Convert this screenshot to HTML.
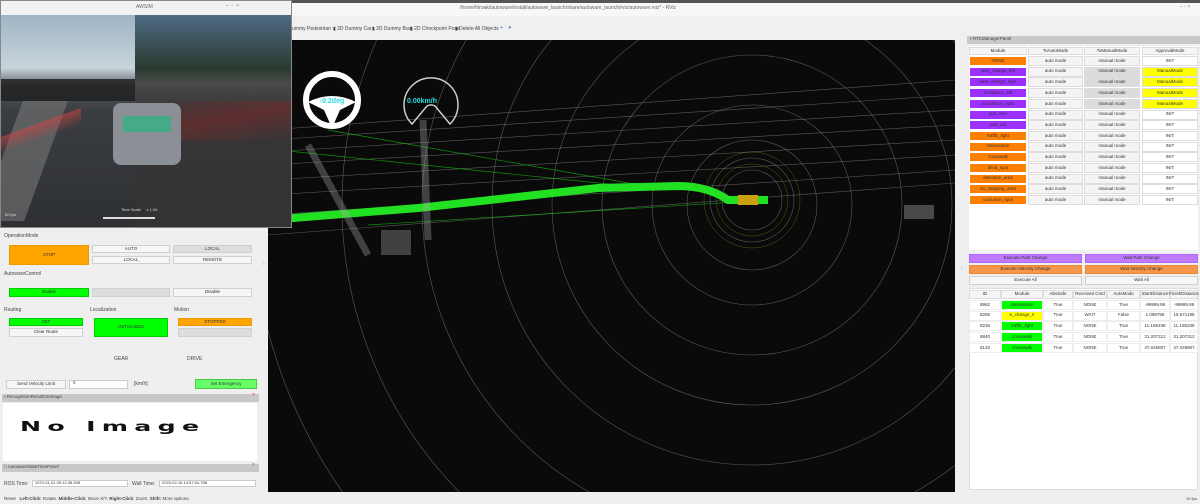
<!DOCTYPE html><html><head><style>
*{margin:0;padding:0;box-sizing:border-box}
html{overflow:hidden;height:504px}
body{width:1200px;height:504px;overflow:hidden;background:#efefef;font-family:"Liberation Sans",sans-serif;font-size:5px;color:#333;position:relative;line-height:1}
.a{position:absolute}
.b{position:absolute;display:flex;align-items:center;justify-content:center;font-size:4.5px;border:1px solid #d0d0d0;background:#f6f6f6;color:#333}
.t{position:absolute;font-size:5px;color:#444}
.c{position:absolute;display:flex;align-items:center;justify-content:center;font-size:4.5px;height:10px;border:1px solid #ddd}
</style></head><body>
<div class="a" style="left:0;top:0;width:1200px;height:3px;background:#555"></div>
<div class="a" style="left:0;top:3px;width:1200px;height:13px;background:#f7f7f7"></div>
<div class="t" style="left:460px;top:6px;color:#666">/home/hiroaki/autoware/install/autoware_launch/share/autoware_launch/rviz/autoware.rviz* - RViz</div>
<div class="t" style="left:1180px;top:5px;color:#888">– ▫ ×</div>
<div class="a" style="left:0;top:16px;width:1200px;height:24px;background:#f0f0f0"></div>
<div class="t" style="left:292px;top:27px">ummy Pedestrian</div>
<div class="t" style="left:333px;top:27px">▮ 2D Dummy Car</div>
<div class="t" style="left:372px;top:27px">▮ 2D Dummy Bus</div>
<div class="t" style="left:410px;top:27px">▮ 2D Checkpoint Pose</div>
<div class="t" style="left:455px;top:27px">▮ Delete All Objects</div>
<div class="t" style="left:500px;top:26px;color:#36c">+ &nbsp;&nbsp; ▾</div>
<div class="a" style="left:268px;top:40px;width:687px;height:452px;background:#0a0a0a;overflow:hidden">
<svg width="687" height="452" style="position:absolute;left:0;top:0">
<g fill="none" stroke="#aaa" stroke-width="0.6" opacity="0.5">
<circle cx="484" cy="160" r="30"/><circle cx="484" cy="160" r="42"/><circle cx="484" cy="165" r="65"/>
<circle cx="484" cy="165" r="100"/><circle cx="484" cy="165" r="150"/><circle cx="484" cy="165" r="200"/>
<circle cx="484" cy="165" r="260"/><circle cx="484" cy="165" r="330"/><circle cx="484" cy="165" r="410"/><circle cx="484" cy="165" r="500"/>
</g>
<g fill="none" stroke="#c9a010" stroke-width="0.5" opacity="0.5"><circle cx="484" cy="160" r="36"/><circle cx="484" cy="160" r="48"/></g>
<g stroke="#999" stroke-width="0.6" opacity="0.55">
<line x1="0" y1="90" x2="687" y2="40"/><line x1="0" y1="100" x2="687" y2="55"/><line x1="0" y1="112" x2="687" y2="70"/>
<line x1="0" y1="125" x2="687" y2="85"/><line x1="0" y1="140" x2="687" y2="100"/><line x1="0" y1="155" x2="687" y2="115"/>
<line x1="0" y1="175" x2="687" y2="130"/><line x1="0" y1="195" x2="687" y2="143"/>
</g>
<g stroke="#1c1" stroke-width="0.7" opacity="0.7"><line x1="60" y1="90" x2="400" y2="150"/><line x1="10" y1="110" x2="350" y2="145"/><line x1="100" y1="185" x2="500" y2="160"/></g>
<path d="M0 180 L150 168 L330 148 L410 146 Q440 146 460 160 L500 160" fill="none" stroke="#22e022" stroke-width="8"/>
<rect x="470" y="155" width="20" height="10" fill="#c9a010"/>
<g fill="none" stroke="#aaa" stroke-width="7" opacity="0.35"><path d="M40 105 L100 215"/><path d="M155 80 L160 200"/></g>
<rect x="113" y="190" width="30" height="25" fill="#777" opacity="0.5"/>
<rect x="636" y="165" width="30" height="14" fill="#888" opacity="0.5"/>
<circle cx="64" cy="60" r="26" fill="none" stroke="#fff" stroke-width="6"/>
<path d="M40 62 Q64 50 88 62 L72 70 L64 88 L56 70Z" fill="#fff"/>
<text x="64" y="63" fill="#2dd" font-size="7" font-weight="bold" text-anchor="middle" font-family="Liberation Sans">-0.2deg</text>
<path d="M144 84 A27 27 0 1 1 182 84 L167 66 A8 8 0 0 0 159 66 Z" fill="none" stroke="#ccc" stroke-width="1.5"/>
<text x="154" y="63" fill="#2dd" font-size="7" font-weight="bold" text-anchor="middle" font-family="Liberation Sans">0.00km/h</text>
</svg></div>
<div class="a" style="left:0;top:0;width:292px;height:228px;background:#222;border:1px solid #888;overflow:hidden">
<div class="a" style="left:0;top:0;width:290px;height:14px;background:#f2f2f2"></div>
<div class="t" style="left:135px;top:4px;color:#666">AWSIM</div>
<div class="t" style="left:225px;top:3px;color:#777">– &nbsp;▫ &nbsp;×</div>
<div class="a" style="left:0;top:14px;width:134px;height:213px;background:linear-gradient(#9fb4c6 0,#c8d4da 25%,#555a60 34%,#3a3d42 45%,#2e3033 100%)"></div>
<div class="a" style="left:134px;top:14px;width:156px;height:213px;background:linear-gradient(#4d6b84 0,#2b3a30 25%,#4a4a4a 32%,#363638 45%,#333 100%)"></div>
<div class="a" style="left:0;top:78px;width:134px;height:22px;background:#1c1c1c;opacity:.8"></div>
<div class="a" style="left:0;top:100px;width:45px;height:120px;background:#777;opacity:.6;transform:skewX(-20deg)"></div>
<div class="a" style="left:134px;top:100px;width:156px;height:40px;background:linear-gradient(170deg,transparent,#7a2a2a 50%,transparent);opacity:.6"></div>
<div class="a" style="left:112px;top:102px;width:68px;height:62px;background:#8a9096;border-radius:8px"></div>
<div class="a" style="left:122px;top:115px;width:48px;height:16px;background:#4a8"></div>
<div class="a" style="left:0;top:100px;width:80px;height:60px;background:linear-gradient(160deg,transparent 40%,#c44 41%,transparent 60%);opacity:.6"></div>
<div class="t" style="left:120px;top:207px;color:#ddd;font-size:4px">Time Scale &nbsp;&nbsp;&nbsp; x 1.00</div>
<div class="a" style="left:102px;top:216px;width:52px;height:2px;background:#ddd"></div>
<div class="t" style="left:4px;top:212px;color:#ddd;font-size:4px">60 fps</div>
</div>
<div class="a" style="left:0;top:228px;width:265px;height:264px;background:#efefef"></div>
<div class="t" style="left:4px;top:234px">OperationMode</div>
<div class="b" style="left:9px;top:245px;width:80px;height:20px;background:#ffa500;border-color:#e90">STOP</div>
<div class="b" style="left:92px;top:245px;width:78px;height:8px">AUTO</div>
<div class="b" style="left:173px;top:245px;width:79px;height:8px;background:#ddd">LOCAL</div>
<div class="b" style="left:92px;top:256px;width:78px;height:8px">LOCAL</div>
<div class="b" style="left:173px;top:256px;width:79px;height:8px">REMOTE</div>
<div class="t" style="left:4px;top:272px">AutowareControl</div>
<div class="b" style="left:9px;top:288px;width:80px;height:9px;background:#0f0;border-color:#0c0">Enable</div>
<div class="b" style="left:92px;top:288px;width:78px;height:9px;background:#ddd"></div>
<div class="b" style="left:173px;top:288px;width:79px;height:9px">Disable</div>
<div class="t" style="left:4px;top:308px">Routing</div>
<div class="t" style="left:90px;top:308px">Localization</div>
<div class="t" style="left:174px;top:308px">Motion</div>
<div class="b" style="left:9px;top:318px;width:74px;height:8px;background:#0f0;border-color:#0c0">SET</div>
<div class="b" style="left:9px;top:328px;width:74px;height:9px">Clear Route</div>
<div class="b" style="left:94px;top:318px;width:74px;height:19px;background:#0f0;border-color:#0c0">INITIALIZED</div>
<div class="b" style="left:178px;top:318px;width:74px;height:8px;background:#ffa500;border-color:#e90">STOPPED</div>
<div class="b" style="left:178px;top:328px;width:74px;height:9px;background:#ddd"></div>
<div class="t" style="left:114px;top:357px">GEAR</div>
<div class="t" style="left:187px;top:357px">DRIVE</div>
<div class="b" style="left:6px;top:380px;width:60px;height:9px">Send Velocity Limit</div>
<div class="a" style="left:69px;top:380px;width:59px;height:9px;background:#fff;border:1px solid #ccc;font-size:4.5px;padding-left:3px">0</div>
<div class="t" style="left:134px;top:382px">[km/h]</div>
<div class="b" style="left:195px;top:379px;width:62px;height:10px;background:#6f6;border-color:#4c4">Set Emergency</div>
<div class="a" style="left:2px;top:394px;width:257px;height:8px;background:#c8c8c8"></div>
<div class="t" style="left:4px;top:395px;font-size:4.5px">▪ RecognitionResultOnImage</div>
<div class="t" style="left:252px;top:393px;color:#d33">×</div>
<div class="a" style="left:3px;top:403px;width:254px;height:58px;background:#fff;overflow:hidden"></div>
<div class="a" style="left:20px;top:420px;font-size:24px;font-weight:bold;color:#111;letter-spacing:6px;transform:scale(1.05,.55);transform-origin:0 0;font-family:'DejaVu Sans',sans-serif;white-space:nowrap">No Image</div>
<div class="a" style="left:2px;top:464px;width:257px;height:8px;background:#c8c8c8"></div>
<div class="t" style="left:4px;top:465px;font-size:4.5px">□ AutowareStateTimePanel</div>
<div class="t" style="left:252px;top:463px;color:#d33">×</div>
<div class="t" style="left:4px;top:482px">ROS Time:</div>
<div class="a" style="left:32px;top:480px;width:96px;height:7px;background:#fff;border:1px solid #ccc;font-size:4px;padding-left:2px">1970-01-01 09:12:38.398</div>
<div class="t" style="left:132px;top:482px">Wall Time:</div>
<div class="a" style="left:159px;top:480px;width:97px;height:7px;background:#fff;border:1px solid #ccc;font-size:4px;padding-left:2px">2023-02-16 14:57:04.788</div>
<div class="t" style="left:4px;top:497px;font-size:4.5px;white-space:nowrap">Reset &nbsp; <b>Left-Click:</b> Rotate. <b>Middle-Click:</b> Move X/Y. <b>Right-Click:</b> Zoom. <b>Shift:</b> More options.</div>
<div class="t" style="left:1186px;top:497px;font-size:4px">10 fps</div>
<div class="a" style="left:965px;top:36px;width:235px;height:456px;background:#efefef"></div>
<div class="a" style="left:967px;top:36px;width:233px;height:8px;background:#c8c8c8"></div>
<div class="t" style="left:970px;top:37px;font-size:4.5px">▪ RTCManagerPanel</div>
<div class="a" style="left:969px;top:46px;width:229px;height:204px;background:#fff"></div>
<div class="b" style="left:969px;top:254px;width:113px;height:9px;background:#c07aff;border-color:#a6f">Execute Path Change</div>
<div class="b" style="left:1085px;top:254px;width:113px;height:9px;background:#c07aff;border-color:#a6f">Wait Path Change</div>
<div class="b" style="left:969px;top:265px;width:113px;height:9px;background:#f5964a;border-color:#e83">Execute Velocity Change</div>
<div class="b" style="left:1085px;top:265px;width:113px;height:9px;background:#f5964a;border-color:#e83">Wait Velocity Change</div>
<div class="b" style="left:969px;top:276px;width:113px;height:9px">Execute All</div>
<div class="b" style="left:1085px;top:276px;width:113px;height:9px">Wait All</div>
<div class="a" style="left:969px;top:288px;width:229px;height:202px;background:#fff;border:1px solid #ddd"></div>
<div id="rt"></div>
<script>
var h='',cols=[[969,58],[1028,55],[1084,56],[1142,56]];
var hd=['Module','ToAutoMode','ToManualMode','ApprovalMode'];
hd.forEach(function(t,i){h+='<div class="c" style="left:'+cols[i][0]+'px;top:47px;width:'+cols[i][1]+'px;height:8px;background:#f5f5f5">'+t+'</div>'});
var rows=[['NONE','#ff7f00'],['lane_change_left','#9b30ff'],['lane_change_right','#9b30ff'],['avoidance_left','#9b30ff'],['avoidance_right','#9b30ff'],['pull_over','#9b30ff'],['pull_out','#9b30ff'],['traffic_light','#ff7f00'],['intersection','#ff7f00'],['crosswalk','#ff7f00'],['blind_spot','#ff7f00'],['detection_area','#ff7f00'],['no_stopping_area','#ff7f00'],['occlusion_spot','#ff7f00']];
rows.forEach(function(r,k){var y=56+k*10.7;var y4=k>=1&&k<=4;
h+='<div class="c" style="left:969px;top:'+y+'px;width:58px;background:'+r[1]+';border-color:#fff">'+r[0]+'</div>';
h+='<div class="c" style="left:1028px;top:'+y+'px;width:55px;background:#f4f4f4">auto mode</div>';
h+='<div class="c" style="left:1084px;top:'+y+'px;width:56px;background:'+(y4?'#dcdcdc':'#f4f4f4')+'">manual mode</div>';
h+='<div class="c" style="left:1142px;top:'+y+'px;width:56px;background:'+(y4?'#ff0':'#fff')+'">'+(y4?'ManualMode':'INIT')+'</div>';});
var c2=[[969,32],[1001,42],[1043,30],[1073,34],[1107,33],[1140,30],[1170,28]];
var hd2=['ID','Module','AbsSafe','Received Cmd','AutoMode','StartDistance','FinishDistance'];
hd2.forEach(function(t,i){h+='<div class="c" style="left:'+c2[i][0]+'px;top:290px;width:'+c2[i][1]+'px;height:9px;background:#f5f5f5">'+t+'</div>'});
var d=[['8962','intersection','#0f0','True','NONE','True','-99999.99','-99999.99'],['8295','e_change_ri','#ff0','True','WAIT','False','1.099755','15.671198'],['8236','traffic_light','#0f0','True','NONE','True','11.185338','11.185338'],['8840','crosswalk','#0f0','True','NONE','True','31.207312','31.207312'],['8132','crosswalk','#0f0','True','NONE','True','47.025807','47.025807']];
d.forEach(function(r,k){var y=300+k*10.7;var v=[r[0],r[1],r[3],r[4],r[5],r[6],r[7]];
v.forEach(function(t,i){h+='<div class="c" style="left:'+c2[i][0]+'px;top:'+y+'px;width:'+c2[i][1]+'px;background:'+(i==1?r[2]:'#fff')+';border-color:#eee">'+t+'</div>'})});
document.getElementById('rt').outerHTML=h;
</script>
<div class="t" style="left:961px;top:266px;color:#888">›</div>
<div class="t" style="left:263px;top:262px;color:#888">›</div>
</body></html>
